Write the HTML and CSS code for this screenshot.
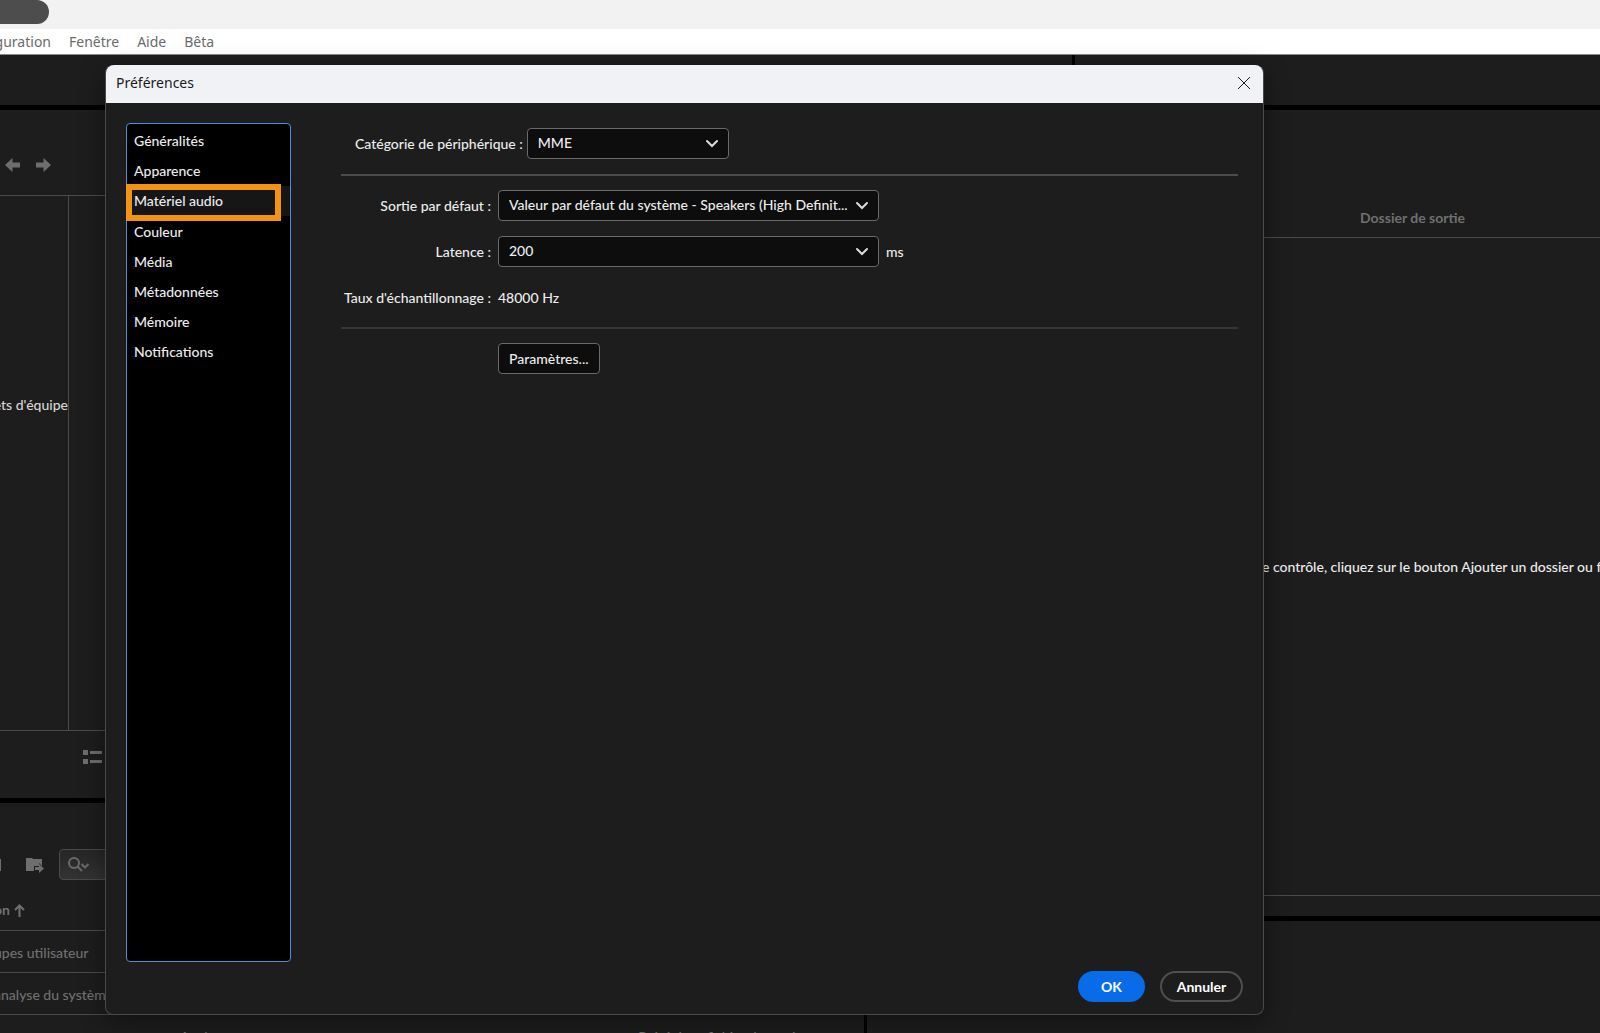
FILE: index.html
```html
<!DOCTYPE html>
<html lang="fr">
  <head>
    <meta charset="UTF-8" />
    <meta name="viewport" content="width=device-width, initial-scale=1.0" />
    <title>Préférences</title>
    <link rel="stylesheet" href="styles.css">
  </head>
  <body>
    <div class="titlebar"><div class="title-pill"></div></div>
    <nav class="menubar">
      <button>guration</button>
      <button>Fenêtre</button>
      <button>Aide</button>
      <button>Bêta</button>
    </nav>

    <div class="tabs">
      <div class="tabs-left"></div>
      <div class="tabs-right"></div>
    </div>

    <div class="workspace">
      <div class="column-left">
        <div class="browser-toolbar">
          <button class="icon-button" aria-label="Précédent">
            <svg width="16" height="16" viewBox="0 0 16 16"><path d="M0 8l7.500-7v4.500H15v5H7.500V15z" /></svg>
          </button>
          <button class="icon-button" aria-label="Suivant">
            <svg width="16" height="16" viewBox="0 0 16 16"><path d="M16 8L8.500 1v4.500H1v5h7.500V15z" /></svg>
          </button>
        </div>
        <div class="browser">
          <div class="browser-tree">ets d'équipe</div>
        </div>
        <div class="browser-footer">
          <button class="icon-button" aria-label="Liste">
            <svg width="20" height="14" viewBox="0 0 20 14"><path d="M0 0h5v5H0zM7 1h12v3H7zM0 9h5v5H0zM7 10h12v3H7z" /></svg>
          </button>
        </div>
        <div class="presets">
          <div class="presets-toolbar">
            <span class="clipped-icon"></span>
            <button class="icon-button" aria-label="Importer">
              <svg width="18" height="16" viewBox="0 0 18 16"><path d="M0 1h6l1 1h9v7l-3-3v3H8v5H0z" /><path d="M9 10h4V7l5 4.500-5 4.500v-3H9z" /></svg>
            </button>
            <button class="search" aria-label="Rechercher">
              <svg width="22" height="16" viewBox="0 0 22 16"><circle cx="6" cy="6" r="5" /><path d="M9.500 9.500l4.500 4.500M13.500 7l3.500 3.500L20.500 7" /></svg>
            </button>
          </div>
          <div class="presets-head">
            on
            <svg width="11" height="13" viewBox="0 0 11 13"><path d="M5.500 13V2M1 6l4.500-4.500L10 6" /></svg>
          </div>
          <div class="presets-row">upes utilisateur</div>
          <div class="presets-row">analyse du système</div>
          <div class="presets-item"><span>Analyse</span><span>Préréglage fichier de sortie</span></div>
        </div>
      </div>

      <div class="column-right">
        <div class="queue-head">Dossier de sortie</div>
        <div class="queue">e contrôle, cliquez sur le bouton Ajouter un dossier ou faites glisser</div>
        <div class="queue-footer"></div>
        <div class="encoding"></div>
      </div>
    </div>

    <div class="dialog" role="dialog" aria-labelledby="dialog-title">
      <div class="dialog-title">
        <span id="dialog-title">Préférences</span>
        <button class="close" aria-label="Fermer">
          <svg width="14" height="14" viewBox="0 0 14 14"><path d="M1 1l12 12M13 1L1 13" /></svg>
        </button>
      </div>
      <div class="dialog-body">
        <div class="categories">
          <button>Généralités</button>
          <button>Apparence</button>
          <button class="selected">Matériel audio</button>
          <button>Couleur</button>
          <button>Média</button>
          <button>Métadonnées</button>
          <button>Mémoire</button>
          <button>Notifications</button>
        </div>
        <form class="settings">
          <div class="device">
            <label for="device">Catégorie de périphérique :</label>
            <div class="select">
              <select id="device"><option>MME</option></select>
              <svg width="14" height="9" viewBox="0 0 14 9"><path d="M2 2l5 5 5-5" /></svg>
            </div>
          </div>
          <hr>
          <div class="fields">
            <label for="output">Sortie par défaut :</label>
            <div class="select">
              <select id="output"><option>Valeur par défaut du système - Speakers (High Definit...</option></select>
              <svg width="14" height="9" viewBox="0 0 14 9"><path d="M2 2l5 5 5-5" /></svg>
            </div>
            <span></span>
            <label for="latency">Latence :</label>
            <div class="select">
              <select id="latency"><option>200</option></select>
              <svg width="14" height="9" viewBox="0 0 14 9"><path d="M2 2l5 5 5-5" /></svg>
            </div>
            <span class="unit">ms</span>
            <span class="name">Taux d'échantillonnage :</span>
            <span>48000 Hz</span>
          </div>
          <hr class="faint">
          <button type="button" class="params">Paramètres...</button>
        </form>
      </div>
      <div class="dialog-footer">
        <button class="ok">OK</button>
        <button class="cancel">Annuler</button>
      </div>
    </div>
  </body>
</html>
```
FILE: styles.css
```css
* {
  box-sizing: border-box;
}
body {
  margin: 0;
  height: 100vh;
  display: flex;
  flex-direction: column;
  position: relative;
  overflow: hidden;
  background: #1d1d1d;
  color: #ececec;
  font: 500 14px/20px Lato, sans-serif;
  white-space: nowrap;
}
button,
select {
  font: inherit;
  color: inherit;
  background: none;
  border: 0;
  margin: 0;
  padding: 0;
}
svg {
  display: block;
  fill: none;
}

/* application window */
.titlebar {
  height: 29px;
  background: #f2f2f2;
}
.title-pill {
  width: 49px;
  height: 24px;
  background: #4d4d4d;
  border-radius: 0 12px 12px 0;
}
.menubar {
  height: 26px;
  display: flex;
  align-items: center;
  gap: 18px;
  background: #fff;
  border-bottom: 1px solid #8a8a8a;
  color: #6b6b6b;
  font: 14px/20px "Noto Sans", sans-serif;
}
.menubar button:first-child {
  width: 51px;
  display: flex;
  justify-content: flex-end;
}
.tabs {
  height: 55px;
  display: flex;
  border-bottom: 5px solid #000;
}
.tabs-left {
  width: 67%;
}
.tabs-right {
  flex: 1;
  border-left: 3px solid #000;
}
.workspace {
  flex: 1;
  min-height: 0;
  display: flex;
}
.column-left {
  width: 54%;
  display: flex;
  flex-direction: column;
  color: #707070;
  overflow: hidden;
}
.column-right {
  flex: 1;
  min-width: 0;
  display: flex;
  flex-direction: column;
  border-left: 3px solid #000;
  overflow: hidden;
}
.icon-button svg {
  fill: #6e6e6e;
}
.browser-toolbar {
  height: 86px;
  padding: 47px 5px 0;
  display: flex;
  align-items: flex-start;
  gap: 14px;
  border-bottom: 1px solid #4a4a4a;
}
.browser {
  flex: 1;
  display: flex;
  border-bottom: 1px solid #4a4a4a;
}
.browser-tree {
  width: 69px;
  padding-top: 199px;
  display: flex;
  justify-content: flex-end;
  border-right: 1px solid #4a4a4a;
  color: #d6d6d6;
}
.browser-footer {
  height: 72px;
  padding: 19px 83px;
  display: flex;
  align-items: flex-start;
  border-bottom: 5px solid #000;
}
.presets {
  height: 230px;
  overflow: hidden;
}
.presets-toolbar {
  margin-top: 46px;
  height: 31px;
  display: flex;
  align-items: center;
}
.clipped-icon {
  width: 1px;
  height: 12px;
  margin-right: 25px;
  background: #6e6e6e;
}
.search {
  width: 200px;
  height: 31px;
  margin-left: 15px;
  padding-left: 8px;
  background: linear-gradient(#262626, #333);
  border: 1px solid #4a4a4a;
  border-radius: 4px;
}
.search svg {
  stroke: #6a6a6a;
  stroke-width: 2;
}
.presets-head {
  height: 51px;
  padding-top: 10px;
  display: flex;
  align-items: center;
  gap: 4px;
  border-bottom: 1px solid #4a4a4a;
  font-weight: 700;
  text-indent: -6px;
}
.presets-head svg {
  stroke: #707070;
  stroke-width: 2;
}
.presets-row {
  height: 42px;
  line-height: 44px;
  text-indent: -6px;
  border-bottom: 1px solid #4a4a4a;
}
.presets-item {
  padding: 12px 61px 0 180px;
  display: flex;
  justify-content: space-between;
}
.queue-head {
  height: 128px;
  padding: 98px 0 0 493px;
  border-bottom: 1px solid #4a4a4a;
  color: #707070;
  font-weight: 700;
}
.queue {
  flex: 1;
  padding-left: 395px;
  display: flex;
  align-items: center;
}
.queue-footer {
  height: 26px;
  border-top: 1px solid #4a4a4a;
  border-bottom: 5px solid #000;
}
.encoding {
  height: 112px;
}

/* preferences dialog */
.dialog {
  position: absolute;
  top: 65px;
  right: 336px;
  bottom: 18px;
  left: 105px;
  display: flex;
  flex-direction: column;
  background: #1d1d1d;
  border: 1px solid #4a4a4a;
  border-top: 0;
  border-radius: 8px;
  box-shadow: 0 6px 24px rgba(0, 0, 0, 0.4);
}
.dialog-title {
  height: 38px;
  padding: 0 12px 2px 10px;
  display: flex;
  align-items: center;
  justify-content: space-between;
  background: #f1f2f6;
  border-radius: 8px 8px 0 0;
  color: #1a1a1a;
  font: 14px/20px "Noto Sans", sans-serif;
}
.close svg {
  stroke: #1a1a1a;
}
.dialog-body {
  flex: 1;
  padding: 20px 25px 9px 20px;
  display: flex;
  gap: 50px;
}
.categories {
  width: 165px;
  padding-top: 2px;
  display: flex;
  flex-direction: column;
  background: #000;
  border: 1px solid #4b8fdc;
  border-radius: 4px;
}
.categories button {
  height: 30px;
  padding-left: 7px;
  text-align: left;
}
.categories .selected {
  position: relative;
  margin-bottom: 1px;
  background: #161616;
}
.categories .selected::after {
  content: "";
  position: absolute;
  inset: -2px 9px -5px -1px;
  border: 6px solid #f39314;
}
.settings {
  flex: 1;
  padding-top: 5px;
}
.device {
  padding-left: 14px;
  display: flex;
  align-items: center;
  gap: 4px;
}
.device .select {
  width: 202px;
}
.select {
  position: relative;
}
.select select {
  appearance: none;
  display: block;
  width: 100%;
  height: 31px;
  padding: 0 30px 1px 10px;
  background: #0d0d0d;
  border: 1px solid #6a6a6a;
  border-radius: 4px;
}
.select svg {
  position: absolute;
  right: 10px;
  top: 11px;
  stroke: #dcdcdc;
  stroke-width: 2;
  stroke-linecap: round;
  pointer-events: none;
}
hr {
  height: 2px;
  margin: 15px 0 14px;
  border: 0;
  background: #4b4b4b;
}
hr.faint {
  margin-top: 14px;
  background: #363636;
}
.fields {
  display: grid;
  grid-template-columns: 150px 381px auto;
  grid-auto-rows: 31px;
  justify-content: start;
  align-items: center;
  gap: 15px 7px;
}
.fields label,
.fields .name {
  display: flex;
  justify-content: flex-end;
}
.params {
  height: 31px;
  margin-left: 157px;
  padding: 0 10px;
  background: #0d0d0d;
  border: 1px solid #6a6a6a;
  border-radius: 4px;
}
.dialog-footer {
  padding: 0 20px 12px;
  display: flex;
  justify-content: flex-end;
  gap: 15px;
}
.dialog-footer button {
  height: 31px;
  border-radius: 16px;
  color: #fff;
  font-weight: 700;
}
.ok {
  width: 67px;
}
.dialog-footer .ok {
  background: #086ce8;
}
.cancel {
  width: 83px;
}
.dialog-footer .cancel {
  border: 2px solid #4f4f4f;
}
```
